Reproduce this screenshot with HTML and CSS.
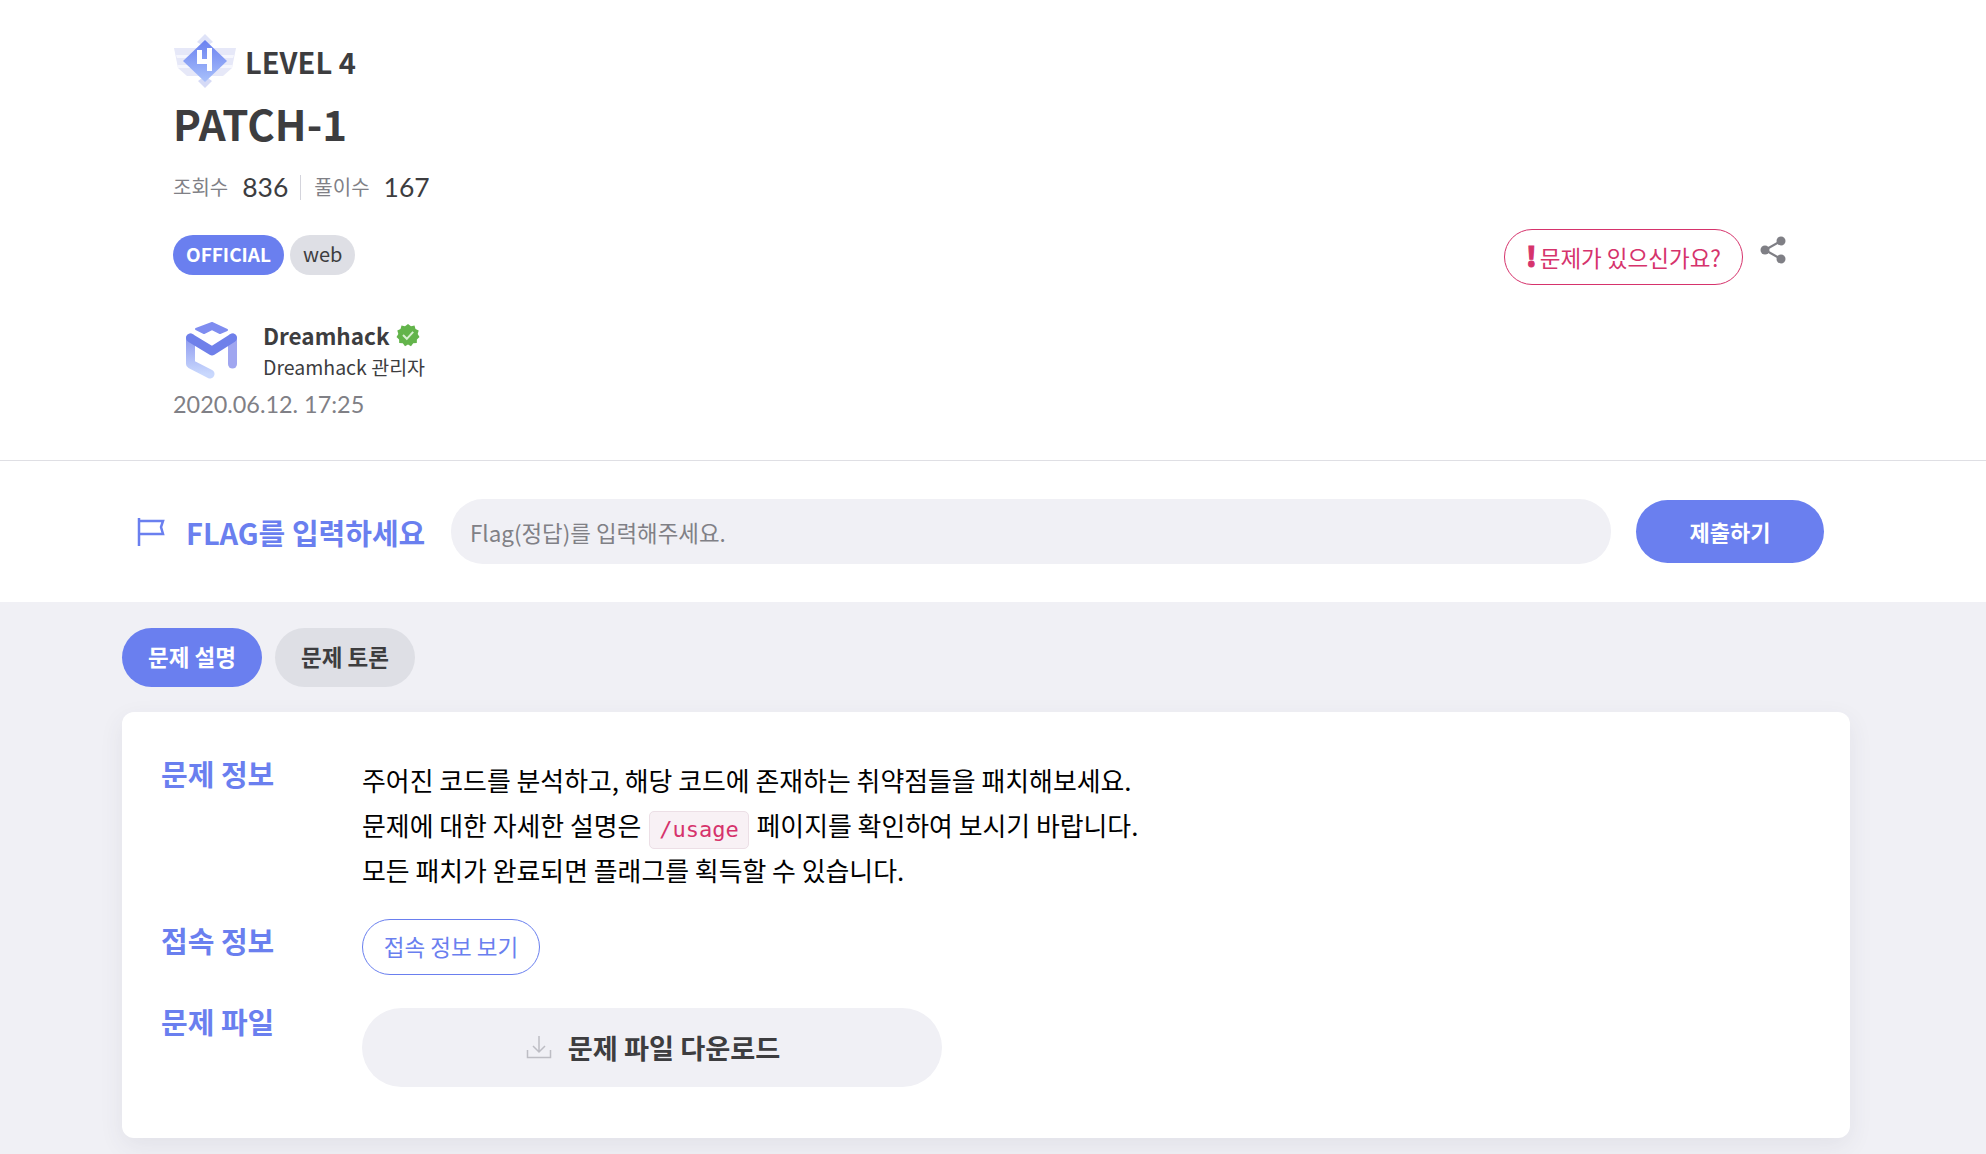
FILE: index.html
```html
<!DOCTYPE html>
<html>
<head>
    <title>PATCH-1</title>
    <link rel="stylesheet" href="styles.css">
</head>
<body>
    <header class="head">
        <div class="head-main">
            <div class="level">
                <svg class="level-icon" width="64" height="56" viewBox="0 0 64 56">
                    <defs>
                        <linearGradient id="lv" x1="0" y1="0" x2="0" y2="1">
                            <stop offset="0" stop-color="#6a80f0"/>
                            <stop offset="1" stop-color="#a9c1fb"/>
                        </linearGradient>
                    </defs>
                    <path d="M1 15H63L59 35 50 43H14L5 35Z" fill="#e6e8f8"/>
                    <path d="M3 22H20V25H4ZM44 22H61L60 25H44ZM4 32H18V35H5ZM46 32H60L59 35H46Z" fill="#f5f6fd"/>
                    <path d="M32 1 40 9 32 14 24 9Z" fill="#dfe3f8"/>
                    <path d="M32 55 25 48 32 43 39 48Z" fill="#d5daf6"/>
                    <path d="M32 7 54 28 32 49 10 28Z" fill="url(#lv)"/>
                    <path d="M24 17H29V26H34V15H39V38H34V31H24Z" fill="#fff"/>
                </svg>
                <span>LEVEL 4</span>
            </div>
            <h1 class="title">PATCH-1</h1>
            <div class="stats">
                <span class="stat-label">조회수</span><span class="stat-num">836</span>
                <span class="stat-sep"></span>
                <span class="stat-label">풀이수</span><span class="stat-num">167</span>
            </div>
            <div class="tags">
                <span class="tag tag-official">OFFICIAL</span>
                <span class="tag tag-web">web</span>
            </div>
            <div class="author">
                <svg class="author-logo" width="56" height="60" viewBox="0 0 56 60">
                    <defs>
                        <linearGradient id="lg" x1="0" y1="0" x2="0" y2="1">
                            <stop offset="0" stop-color="#8f9bf0"/>
                            <stop offset="1" stop-color="#c9d8fd"/>
                        </linearGradient>
                    </defs>
                    <path d="M12 9 28 3 43 10 36 13 28 9 20 13Z" fill="#7f8df0" stroke="#7f8df0" stroke-width="2" stroke-linejoin="round"/>
                    <path d="M6.500 44V18L26 53" fill="none" stroke="none"/>
                    <path d="M6.500 18V44L26 54" fill="none" stroke="url(#lg)" stroke-width="9" stroke-linecap="round" stroke-linejoin="round"/>
                    <path d="M48.500 18V44" fill="none" stroke="#a0a6f0" stroke-width="9" stroke-linecap="round"/>
                    <path d="M6.500 18 28 31 48.500 18" fill="none" stroke="#6f80ea" stroke-width="9" stroke-linecap="round" stroke-linejoin="round"/>
                </svg>
                <div class="author-text">
                    <div class="author-name">Dreamhack
                        <svg width="24" height="24" viewBox="0 0 24 24">
                            <path d="M12 1 15 3.300 18.500 2.600 19.500 6 22.700 7.500 21.700 11 23.500 14 20.900 16.400 20.800 20 17.200 20.300 15 23.200 12 21.500 9 23.200 6.800 20.300 3.200 20 3.100 16.400 .5 14 2.300 11 1.300 7.500 4.500 6 5.500 2.600 9 3.300Z" fill="#63b44b"/>
                            <path d="M7 12 10.800 15.800 17.200 8.800" fill="none" stroke="#d9f0d2" stroke-width="2"/>
                        </svg>
                    </div>
                    <div class="author-role">Dreamhack 관리자</div>
                </div>
            </div>
            <div class="date">2020.06.12. 17:25</div>
        </div>
        <div class="head-actions">
            <button class="report"><span class="report-mark">!</span>문제가 있으신가요?</button>
            <svg class="share" width="28" height="30" viewBox="0 0 28 30">
                <path d="M22 6 6 15 22 24" fill="none" stroke="#7f7f85" stroke-width="2.200"/>
                <circle cx="22" cy="6" r="4.500" fill="#7f7f85"/>
                <circle cx="6" cy="15" r="4.500" fill="#7f7f85"/>
                <circle cx="22" cy="24" r="4.500" fill="#7f7f85"/>
            </svg>
        </div>
    </header>

    <section class="flag-bar">
        <svg class="flag-icon" width="28" height="30" viewBox="0 0 28 30">
            <path d="M2 1V29M2 4H26L24 10 26 17H2" fill="none" stroke="#6a7fef" stroke-width="2.500"/>
        </svg>
        <div class="flag-title">FLAG를 입력하세요</div>
        <div class="flag-input">Flag(정답)를 입력해주세요.</div>
        <button class="flag-submit">제출하기</button>
    </section>

    <main class="content">
        <div class="tabs">
            <div class="tab tab-active">문제 설명</div>
            <div class="tab">문제 토론</div>
        </div>
        <div class="card">
            <div class="row row-desc">
                <div class="row-label">문제 정보</div>
                <div class="desc">
                    <p>주어진 코드를 분석하고, 해당 코드에 존재하는 취약점들을 패치해보세요.</p>
                    <p>문제에 대한 자세한 설명은 <code>/usage</code> 페이지를 확인하여 보시기 바랍니다.</p>
                    <p>모든 패치가 완료되면 플래그를 획득할 수 있습니다.</p>
                </div>
            </div>
            <div class="row row-conn">
                <div class="row-label">접속 정보</div>
                <button class="conn-btn">접속 정보 보기</button>
            </div>
            <div class="row row-file">
                <div class="row-label">문제 파일</div>
                <button class="file-btn">
                    <svg width="26" height="24" viewBox="0 0 26 24">
                        <path d="M13 1V17M7 11 13 17 19 11M1.500 15V22.500H24.500V15" fill="none" stroke="#bdbdc4" stroke-width="1.500"/>
                    </svg>
                    문제 파일 다운로드
                </button>
            </div>
        </div>
    </main>
</body>
</html>
```

FILE: styles.css
```css
* { box-sizing: border-box; }
html, body { margin: 0; }
body { background: #f0f0f5; color: #3d3d3f; font-family: "Noto Sans CJK KR", sans-serif; height: 1154px; overflow: hidden; }
button { font-family: inherit; cursor: pointer; }

.head { background: #fff; height: 461px; padding: 34px 199px 0 173px; border-bottom: 1px solid #dfdfe4; display: flex; justify-content: space-between; }
.level { display: flex; align-items: center; gap: 8px; height: 54px; font-size: 29px; font-weight: 700; }
.title { margin: 7px 0 0; font-size: 42px; line-height: 56px; font-weight: 700; }
.stats { display: flex; align-items: center; height: 40px; margin-top: 16px; }
.stat-label { font-size: 20px; color: #808086; margin-top: -2px; }
.stat-num { font-family: Lato, sans-serif; font-size: 26.500px; margin-left: 14px; }
.stat-sep { width: 1px; height: 25px; background: #d4d4dc; margin: 0 13px 0 12px; }
.tags { display: flex; gap: 6px; margin-top: 28px; }
.tag { height: 40px; line-height: 38px; border-radius: 20px; font-size: 20px; padding: 0 13px; }
.tag-official { background: #6a7fef; color: #fff; font-weight: 700; font-size: 19px; }
.tag-web { background: #dedfe5; }
.author { display: flex; margin-top: 33px; padding-left: 11px; }
.author-logo { margin-top: 12px; }
.author-text { margin-left: 23px; margin-top: 9px; }
.author-name { display: flex; align-items: center; gap: 6px; font-size: 22.500px; font-weight: 700; line-height: 36px; }
.author-role { font-size: 19.500px; line-height: 28px; }
.date { font-family: Lato, sans-serif; font-size: 23.400px; color: #808086; line-height: 30px; margin-top: 8px; }

.head-actions { display: flex; align-items: flex-start; gap: 16px; padding-top: 195px; }
.report { width: 239px; height: 56px; background: #fff; border: 1px solid #d6336c; border-radius: 28px; color: #d6336c; font-size: 22.500px; padding: 0; }
.report-mark { font-weight: 900; margin-right: 3px; font-size: 27px; line-height: 20px; -webkit-text-stroke: 1px #d6336c; }
.share { margin-top: 6px; }

.flag-bar { background: #fff; height: 141px; display: flex; align-items: center; padding: 0 162px 0 137px; }
.flag-icon { flex: none; margin-top: 1px; }
.flag-title { color: #6a7fef; font-size: 29px; font-weight: 700; margin-left: 21px; white-space: nowrap; width: 265px; }
.flag-input { flex: 1; height: 65px; line-height: 66px; margin-right: 25px; padding-left: 19px; background: #f0f0f5; border-radius: 32px; color: #808086; font-size: 22.400px; }
.flag-submit { width: 188px; height: 63px; padding-bottom: 2px; background: #6a7fef; color: #fff; border: 0; border-radius: 32px; font-size: 22px; font-weight: 700; }

.content { padding: 26px 136px 0 122px; }
.tabs { display: flex; gap: 13px; }
.tab { width: 140px; height: 59px; line-height: 56px; text-align: center; background: #dedfe5; border-radius: 30px; font-size: 22.500px; font-weight: 700; }
.tab-active { background: #6a7fef; color: #fff; }
.card { background: #fff; border-radius: 12px; margin-top: 25px; height: 426px; padding: 40px 39px; box-shadow: 0 8px 24px rgba(60, 60, 90, 0.08); }
.row { display: flex; align-items: flex-start; }
.row-label { width: 201px; flex: none; color: #6a7fef; font-size: 29px; font-weight: 700; line-height: 40px; padding-top: 1px; }
.desc { color: #000; font-size: 25.900px; margin-top: 5px; }
.desc p { margin: 0; height: 45px; line-height: 45px; white-space: nowrap; }
.desc code { display: inline-block; height: 38px; line-height: 35px; padding: 0 9px; margin: 0 2px; vertical-align: -1px; border: 1px solid #ecdfe6; border-radius: 5px; background: #f8f1f5; color: #d6336c; font-family: "DejaVu Sans Mono", monospace; font-size: 22px; }
.row-conn { margin-top: 27px; margin-bottom: 34px; }
.row-conn .row-label { margin-top: 0; }
.row-file .row-label { margin-top: -9px; }
.conn-btn { width: 178px; height: 56px; background: #fff; border: 1px solid #6a7fef; border-radius: 28px; color: #6a7fef; font-size: 22.500px; padding: 0 0 2px; }
.file-btn { width: 580px; height: 79px; margin-top: -1px; padding: 0 0 2px 2px; display: flex; align-items: center; justify-content: center; gap: 16px; background: #f0f0f5; border: 0; border-radius: 40px; color: #3d3d3f; font-size: 27.200px; font-weight: 700; }
```
